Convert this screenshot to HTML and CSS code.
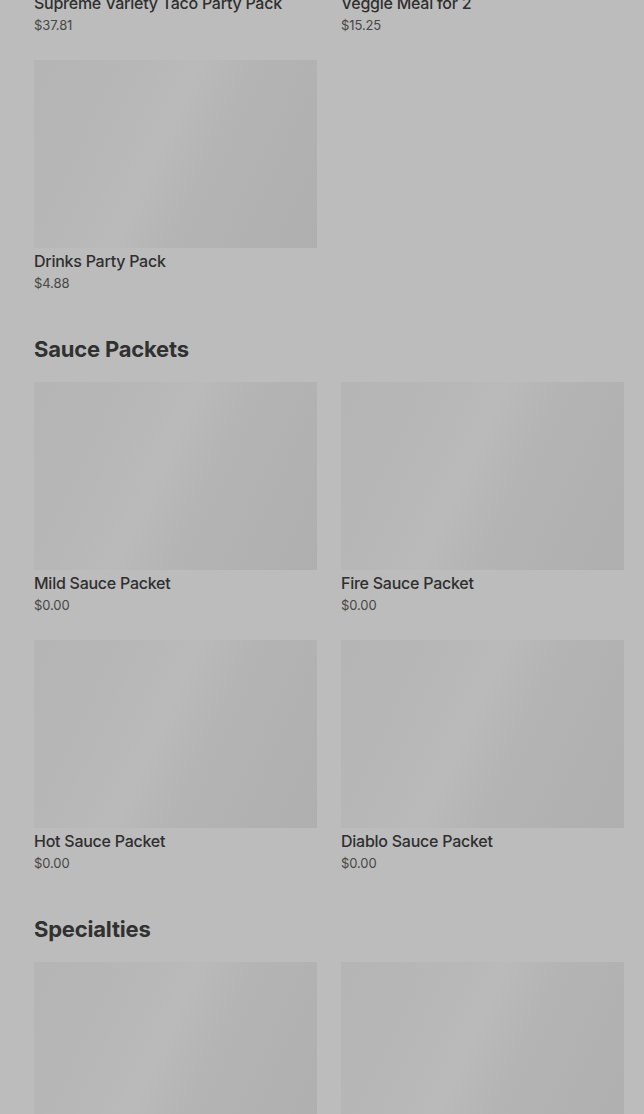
FILE: index.html
```html
<!DOCTYPE html>
<html lang="en">
<head>
<meta charset="utf-8">
<link rel="stylesheet" href="styles.css">
<title>Menu</title>
</head>
<body>
<main class="menu">
  <section class="section">
    <div class="grid">
      <div class="card"><div class="thumb"></div><div class="name">Supreme Variety Taco Party Pack</div><div class="price">$37.81</div></div>
      <div class="card"><div class="thumb"></div><div class="name">Veggie Meal for 2</div><div class="price">$15.25</div></div>
      <div class="card"><div class="thumb"></div><div class="name">Drinks Party Pack</div><div class="price">$4.88</div></div>
    </div>
  </section>
  <section class="section">
    <h2 class="heading">Sauce Packets</h2>
    <div class="grid">
      <div class="card"><div class="thumb"></div><div class="name">Mild Sauce Packet</div><div class="price">$0.00</div></div>
      <div class="card"><div class="thumb"></div><div class="name">Fire Sauce Packet</div><div class="price">$0.00</div></div>
      <div class="card"><div class="thumb"></div><div class="name">Hot Sauce Packet</div><div class="price">$0.00</div></div>
      <div class="card"><div class="thumb"></div><div class="name">Diablo Sauce Packet</div><div class="price">$0.00</div></div>
    </div>
  </section>
  <section class="section">
    <h2 class="heading">Specialties</h2>
    <div class="grid">
      <div class="card"><div class="thumb"></div><div class="name">Cheesy Gordita Crunch</div><div class="price">$5.49</div></div>
      <div class="card"><div class="thumb"></div><div class="name">Chalupa Supreme</div><div class="price">$4.79</div></div>
    </div>
  </section>
</main>
</body>
</html>
```
FILE: styles.css
```css
html, body {
  margin: 0;
  padding: 0;
  background: #bcbcbc;
  overflow: hidden;
}
body {
  font-family: Inter, "Noto Sans", sans-serif;
  color: #2f2f2f;
}
.menu {
  margin-top: -198px;
  padding: 0 20px 0 34px;
}
.section + .section {
  margin-top: 39px;
}
.heading {
  margin: 0 0 17px;
  font-size: 22px;
  line-height: 32px;
  font-weight: 700;
  letter-spacing: -0.2px;
  color: #313131;
}
.grid {
  display: grid;
  grid-template-columns: 283px 283px;
  column-gap: 24px;
  row-gap: 24px;
}
.card {
  display: flex;
  flex-direction: column;
}
.thumb {
  height: 188px;
  background: linear-gradient(115deg, #b5b5b5 0%, #b7b7b7 28%, #bababa 45%, #b4b4b4 60%, #afafaf 100%);
}
.name {
  padding-top: 1px;
  font-size: 16px;
  line-height: 24px;
  font-weight: 500;
  letter-spacing: -0.25px;
  color: #2f2f2f;
  white-space: nowrap;
}
.price {
  font-size: 13px;
  line-height: 21px;
  letter-spacing: -0.1px;
  color: #474747;
}
```
